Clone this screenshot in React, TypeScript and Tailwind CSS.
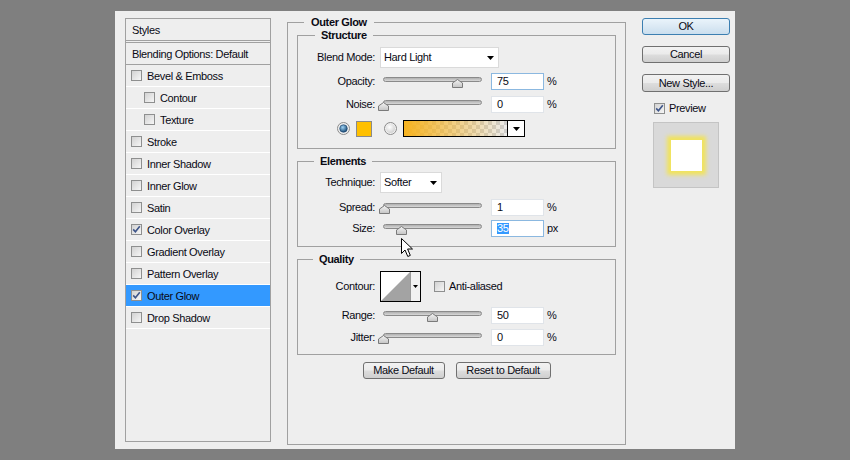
import React from "react";

type StyleRow = { label: string; checked?: boolean; indent?: boolean; active?: boolean };

const styleRows: StyleRow[] = [
  { label: "Bevel & Emboss" },
  { label: "Contour", indent: true },
  { label: "Texture", indent: true },
  { label: "Stroke" },
  { label: "Inner Shadow" },
  { label: "Inner Glow" },
  { label: "Satin" },
  { label: "Color Overlay", checked: true },
  { label: "Gradient Overlay" },
  { label: "Pattern Overlay" },
  { label: "Outer Glow", checked: true, active: true },
  { label: "Drop Shadow" },
];

function Check({ on }: { on?: boolean }) {
  return (
    <span className="flex h-[11px] w-[11px] flex-none items-center justify-center border border-[#8e8f8f] bg-[linear-gradient(135deg,#d2d2d2,#f6f6f6)]">
      {on && (
        <svg width="9" height="9" viewBox="0 0 9 9">
          <path d="M1.2 4.4 L3.4 6.8 L7.8 1.2" stroke="#3e5589" strokeWidth="1.6" fill="none" />
        </svg>
      )}
    </span>
  );
}

function Arrow() {
  return (
    <svg width="7" height="4" viewBox="0 0 7 4" className="flex-none">
      <polygon points="0,0 7,0 3.5,4" fill="#000" />
    </svg>
  );
}

function Radio({ on }: { on?: boolean }) {
  return (
    <svg width="13" height="13" viewBox="0 0 13 13" className="flex-none">
      <defs>
        <radialGradient id={on ? "rOn" : "rOff"} cx="0.4" cy="0.35" r="0.7">
          <stop offset="0" stopColor={on ? "#9fd3f5" : "#ffffff"} />
          <stop offset="1" stopColor={on ? "#0d3f6b" : "#cfcfcf"} />
        </radialGradient>
      </defs>
      <circle cx="6.5" cy="6.5" r="6" fill="#f0f0f0" stroke="#8a8a8a" />
      <circle cx="6.5" cy="6.5" r={on ? 3.8 : 4.5} fill={`url(#${on ? "rOn" : "rOff"})`} stroke={on ? "#17406a" : "none"} strokeWidth="0.6" />
    </svg>
  );
}

function Label({ children }: { children: React.ReactNode }) {
  return <span className="w-[77px] flex-none text-right">{children}</span>;
}

function Slider({ pos }: { pos: number }) {
  return (
    <div className="relative ml-[5px] h-[17px] w-[105px] flex-none">
      <div className="absolute left-[3px] top-[4px] h-[5px] w-[99px] rounded-full border border-[#8a8a8a] bg-[linear-gradient(#b0b0b0,#d8d8d8)]" />
      <svg
        width="11"
        height="9"
        viewBox="0 0 11 9"
        className="absolute top-[6px]"
        style={{ left: 3 + pos * 99 - 5.5 }}
      >
        <defs>
          <linearGradient id="thumb" x1="0" y1="0" x2="0" y2="1">
            <stop offset="0" stopColor="#f4f4f4" />
            <stop offset="1" stopColor="#c4c4c4" />
          </linearGradient>
        </defs>
        <polygon points="0.5,4 5.5,0.5 10.5,4 10.5,8.5 0.5,8.5" fill="url(#thumb)" stroke="#7a7a7a" />
      </svg>
    </div>
  );
}

function NumInput({ value, focus, selected }: { value: string; focus?: boolean; selected?: boolean }) {
  return (
    <div
      className={`ml-[6px] flex h-[17px] w-[53px] flex-none items-center border bg-white pl-[5px] ${
        focus ? "border-[#8bb8e0]" : "border-[#e0e4e9]"
      }`}
    >
      {selected ? <span className="bg-[#3399ff] text-white">{value}</span> : value}
    </div>
  );
}

function SliderRow({ label, pos, value, unit, focus, selected, className }: {
  label: string;
  pos: number;
  value: string;
  unit: string;
  focus?: boolean;
  selected?: boolean;
  className: string;
}) {
  return (
    <div className={`flex h-[17px] items-center ${className}`}>
      <Label>{label}</Label>
      <Slider pos={pos} />
      <NumInput value={value} focus={focus} selected={selected} />
      <span className="ml-[3px]">{unit}</span>
    </div>
  );
}

function Select({ value, width }: { value: string; width: string }) {
  return (
    <div className={`ml-[5px] flex h-[21px] flex-none items-center justify-between border border-[#dadada] bg-white pl-[3px] pr-[4px] ${width}`}>
      <span>{value}</span>
      <Arrow />
    </div>
  );
}

function Button({ children, primary, className }: { children: React.ReactNode; primary?: boolean; className: string }) {
  return (
    <div
      className={`flex items-center justify-center rounded-[3px] border ${
        primary
          ? "border-[#3c7fb1] bg-[linear-gradient(#eaf4fb,#dbe9f4_50%,#cadeee)]"
          : "border-[#707070] bg-[linear-gradient(#f2f2f2,#ebebeb_48%,#dddddd_52%,#cfcfcf)]"
      } ${className}`}
    >
      {children}
    </div>
  );
}

function StylesList() {
  return (
    <div className="mt-[3px] flex h-[424px] w-[146px] flex-none flex-col border border-[#a0a0a0]">
      <div className="flex h-[22px] items-center border-b border-[#a0a0a0] pl-[6px] pt-[1px]">Styles</div>
      <div className="h-[1px]" />
      <div className="flex h-[23px] items-center border-y border-[#a0a0a0] pl-[6px] pt-[1px]">Blending Options: Default</div>
      {styleRows.map((r) => (
        <div
          key={r.label}
          className={`flex h-[22px] items-center gap-[5px] border-b border-white ${r.indent ? "pl-[18px]" : "pl-[5px]"} ${
            r.active ? "bg-[#3399ff]" : ""
          }`}
        >
          <Check on={r.checked} />
          <span className="pt-[1px]">{r.label}</span>
        </div>
      ))}
    </div>
  );
}

export default function App() {
  return (
    <div className="relative h-[460px] w-[850px] bg-[#7f7f7f] pl-[115px] pt-[11px] font-['Liberation_Sans',Arial,sans-serif] text-[11px] leading-none tracking-[-0.35px] text-[#0a0a14]">
      <div className="flex h-[438px] w-[620px] items-start bg-[#eeeeee] pl-[10px] pt-[4px]">
        <StylesList />

        <fieldset className="ml-[16px] h-[430px] w-[339px] flex-none border border-[#a0a0a0] px-[9px]">
          <legend className="ml-[7px] px-[7px] text-[11px] font-bold leading-[14px]">Outer Glow</legend>

          <fieldset className="-mt-[1px] h-[121px] border border-[#a0a0a0]">
            <legend className="ml-[17px] px-[6px] font-bold leading-[14px]">Structure</legend>
            <div className="mt-[5px] flex h-[21px] items-center">
              <Label>Blend Mode:</Label>
              <Select value="Hard Light" width="w-[119px]" />
            </div>
            <SliderRow className="mt-[5px]" label="Opacity:" pos={0.75} value="75" unit="%" focus />
            <SliderRow className="mt-[6px]" label="Noise:" pos={0} value="0" unit="%" />
            <div className="mt-[7px] flex h-[17px] items-center pl-[39px]">
              <Radio on />
              <div className="ml-[6px] h-[16px] w-[16px] border border-[#8a8a8a] bg-[#ffc000]" />
              <div className="ml-[12px]">
                <Radio />
              </div>
              <div className="ml-[6px] flex h-[17px] w-[122px] border border-black">
                <div className="h-full flex-1 bg-[conic-gradient(#cdcdcd_25%,#ececec_0_50%,#cdcdcd_0_75%,#ececec_0)] bg-[length:8px_8px]">
                  <div className="h-full w-full bg-[linear-gradient(to_right,#f7b320,#f7b32000)]" />
                </div>
                <div className="flex w-[17px] items-center justify-center border-l border-black bg-white">
                  <Arrow />
                </div>
              </div>
            </div>
          </fieldset>

          <fieldset className="mt-[5px] h-[93px] border border-[#a0a0a0]">
            <legend className="ml-[16px] px-[6px] font-bold leading-[14px]">Elements</legend>
            <div className="mt-[4px] flex h-[21px] items-center">
              <Label>Technique:</Label>
              <Select value="Softer" width="w-[62px]" />
            </div>
            <SliderRow className="mt-[6px]" label="Spread:" pos={0.01} value="1" unit="%" />
            <SliderRow className="mt-[4px]" label="Size:" pos={0.19} value="35" unit="px" focus selected />
          </fieldset>

          <fieldset className="mt-[5px] h-[103px] border border-[#a0a0a0]">
            <legend className="ml-[15px] px-[6px] font-bold leading-[14px]">Quality</legend>
            <div className="mt-[5px] flex h-[31px] items-center">
              <Label>Contour:</Label>
              <div className="ml-[5px] flex h-[31px] w-[41px] flex-none border border-black bg-white">
                <svg width="29" height="29" viewBox="0 0 29 29" className="flex-none">
                  <polygon points="0,29 29,0 29,29" fill="#a3a3a3" />
                </svg>
                <div className="flex flex-1 items-center justify-center border-l border-[#9a9a9a] bg-[#f2f2f2]">
                  <svg width="5" height="3" viewBox="0 0 5 3">
                    <polygon points="0,0 5,0 2.5,3" fill="#000" />
                  </svg>
                </div>
              </div>
              <div className="ml-[13px] flex items-center gap-[4px]">
                <Check />
                <span>Anti-aliased</span>
              </div>
            </div>
            <SliderRow className="mt-[5px]" label="Range:" pos={0.5} value="50" unit="%" />
            <SliderRow className="mt-[5px]" label="Jitter:" pos={0} value="0" unit="%" />
          </fieldset>

          <div className="mt-[7px] flex justify-center gap-[11px]">
            <Button className="h-[17px] w-[82px]">Make Default</Button>
            <Button className="h-[17px] w-[95px]">Reset to Default</Button>
          </div>
        </fieldset>

        <div className="ml-[16px] mt-[3px] flex w-[88px] flex-none flex-col">
          <Button primary className="h-[17px]">
            OK
          </Button>
          <Button className="mt-[11px] h-[17px]">Cancel</Button>
          <Button className="mt-[11px] h-[18px]">New Style...</Button>
          <div className="ml-[12px] mt-[10px] flex h-[12px] items-center gap-[4px]">
            <Check on />
            <span>Preview</span>
          </div>
          <div className="ml-[11px] mt-[8px] flex h-[66px] w-[66px] items-center justify-center border border-[#c4c4c4] bg-[#d9d9d9]">
            <div className="h-[31px] w-[31px] bg-white shadow-[0_0_4px_4px_#f1e35c]" />
          </div>
        </div>
      </div>

      <svg width="13" height="20" viewBox="0 0 13 20" className="absolute left-[401px] top-[238px]">
        <path d="M0.5 0.5 L0.5 15.5 L4 12 L6.8 18.5 L9.3 17.4 L6.6 11 L11.5 11 Z" fill="#fff" stroke="#000" strokeWidth="1" />
      </svg>
    </div>
  );
}
